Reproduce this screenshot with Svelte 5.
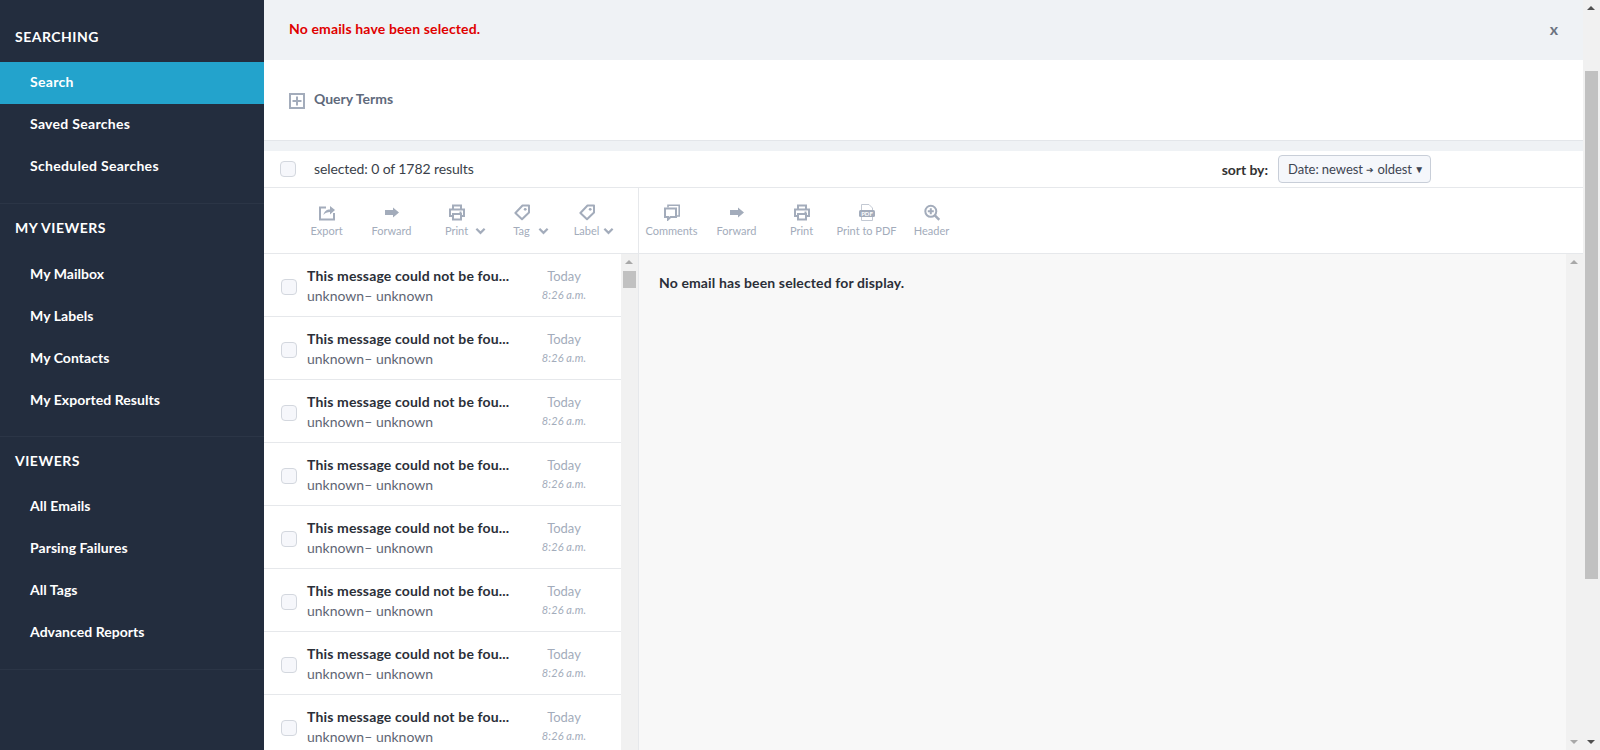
<script lang="ts">
	type NavSection = { title: string; items: string[] };

	const sections: NavSection[] = [
		{ title: 'SEARCHING', items: ['Search', 'Saved Searches', 'Scheduled Searches'] },
		{ title: 'MY VIEWERS', items: ['My Mailbox', 'My Labels', 'My Contacts', 'My Exported Results'] },
		{ title: 'VIEWERS', items: ['All Emails', 'Parsing Failures', 'All Tags', 'Advanced Reports'] }
	];

	const rows = Array.from({ length: 8 }, (_, i) => i);
</script>

<div class="page">
	<nav class="sidebar">
		{#each sections as section}
			<section class="nav-section">
				<h2>{section.title}</h2>
				{#each section.items as item}
					<a href="#top" class:active={item === 'Search'}>{item}</a>
				{/each}
			</section>
		{/each}
	</nav>

	<main class="main">
		<div class="alert">
			<span>No emails have been selected.</span>
			<button type="button" class="close">x</button>
		</div>

		<div class="query">
			<svg class="plus" width="16" height="16" viewBox="0 0 16 16" aria-hidden="true">
				<path d="M1 1h14v14H1zM8 3.500v9M3.500 8h9" fill="none" stroke="#a3acbb" stroke-width="2" />
			</svg>
			<span>Query Terms</span>
		</div>

		<div class="gap"></div>

		<div class="selected-bar">
			<span class="check"></span>
			<span class="count">selected: 0 of 1782 results</span>
			<span class="sort-label">sort by:</span>
			<span class="sort-select"><span>Date: newest <em>➔</em> oldest</span> <i>▼</i></span>
		</div>

		<div class="toolbars">
			<div class="tools left">
				<div class="tool">
					<svg width="16" height="16" viewBox="0 0 16 16" aria-hidden="true">
						<path d="M7 3H1v12h14V8.500" fill="none" stroke="#a3acbb" stroke-width="2" />
						<path d="M4.500 10.500C5 7 7.500 5 11 5V1.500L16 5.500 11 10V7.500c-2.500 0-5 .8-6.500 3z" fill="#a3acbb" />
					</svg>
					<span>Export</span>
				</div>
				<div class="tool">
					<svg width="14" height="10" viewBox="0 0 14 10" aria-hidden="true">
						<path d="M0 2.500h8V0l6 5-6 5V7.500H0z" fill="#a3acbb" />
					</svg>
					<span>Forward</span>
				</div>
				<div class="tool">
					<svg width="16" height="16" viewBox="0 0 16 16" aria-hidden="true">
						<path d="M4 5V1h8v4M4 11.500H1V5h14v6.500h-3M4 9.500h8V15H4z" fill="none" stroke="#a3acbb" stroke-width="2" />
						<path d="M10.500 7h2v1.500h-2z" fill="#a3acbb" />
					</svg>
					<span class="has-chev">Print <svg class="chev print" width="11" height="8" viewBox="0 0 12 8"><path d="M1.500 1.500 6 6l4.500-4.500" fill="none" stroke="#a3acbb" stroke-width="2.400" /></svg></span>
				</div>
				<div class="tool">
					<svg width="16" height="16" viewBox="0 0 16 16" aria-hidden="true">
						<path d="M1.400 8.500 8.500 1H15v7l-7 6.800z" fill="none" stroke="#a3acbb" stroke-width="2" stroke-linejoin="round" />
						<circle cx="11.200" cy="4.800" r="1.400" fill="#a3acbb" />
					</svg>
					<span class="has-chev">Tag <svg class="chev tag" width="11" height="8" viewBox="0 0 12 8"><path d="M1.500 1.500 6 6l4.500-4.500" fill="none" stroke="#a3acbb" stroke-width="2.400" /></svg></span>
				</div>
				<div class="tool">
					<svg width="16" height="16" viewBox="0 0 16 16" aria-hidden="true">
						<path d="M1.400 8.500 8.500 1H15v7l-7 6.800z" fill="none" stroke="#a3acbb" stroke-width="2" stroke-linejoin="round" />
						<circle cx="11.200" cy="4.800" r="1.400" fill="#a3acbb" />
					</svg>
					<span class="has-chev">Label <svg class="chev lab" width="11" height="8" viewBox="0 0 12 8"><path d="M1.500 1.500 6 6l4.500-4.500" fill="none" stroke="#a3acbb" stroke-width="2.400" /></svg></span>
				</div>
			</div>
			<div class="tools right">
				<div class="tool">
					<svg width="16" height="16" viewBox="0 0 16 16" aria-hidden="true">
						<path d="M4 3V.8h11.200V11.500H13" fill="none" stroke="#a3acbb" stroke-width="1.600" />
						<path d="M1 4h11v8.500H6.500L4 15v-2.500H1z" fill="none" stroke="#a3acbb" stroke-width="2" />
					</svg>
					<span>Comments</span>
				</div>
				<div class="tool">
					<svg width="14" height="10" viewBox="0 0 14 10" aria-hidden="true">
						<path d="M0 2.500h8V0l6 5-6 5V7.500H0z" fill="#a3acbb" />
					</svg>
					<span>Forward</span>
				</div>
				<div class="tool">
					<svg width="16" height="16" viewBox="0 0 16 16" aria-hidden="true">
						<path d="M4 5V1h8v4M4 11.500H1V5h14v6.500h-3M4 9.500h8V15H4z" fill="none" stroke="#a3acbb" stroke-width="2" />
						<path d="M10.500 7h2v1.500h-2z" fill="#a3acbb" />
					</svg>
					<span>Print</span>
				</div>
				<div class="tool">
					<svg width="16" height="17" viewBox="0 0 16 17" aria-hidden="true">
						<path d="M2.500 6V.5h7.500l3.500 3.500v2M2.500 13v3.500h11V13" fill="none" stroke="#c3c9d3" stroke-width="1" />
						<rect x="0" y="6" width="16" height="7" rx="1.500" fill="#a3acbb" />
						<text x="8" y="11.800" text-anchor="middle" class="pdf-text">PDF</text>
					</svg>
					<span>Print to PDF</span>
				</div>
				<div class="tool">
					<svg width="16" height="16" viewBox="0 0 16 16" aria-hidden="true">
						<circle cx="6.800" cy="6.800" r="5.500" fill="none" stroke="#a3acbb" stroke-width="2" />
						<path d="M6.800 3.800v6M3.800 6.800h6" fill="none" stroke="#a3acbb" stroke-width="2" />
						<path d="m10.800 10.800 4.500 4.500" stroke="#a3acbb" stroke-width="2.400" />
					</svg>
					<span>Header</span>
				</div>
			</div>
		</div>

		<div class="panes">
			<div class="list-pane">
				<div class="list">
					{#each rows as row (row)}
						<div class="row">
							<span class="check"></span>
							<div class="row-text">
								<div class="subject">This message could not be fou...</div>
								<div class="from">unknown– unknown</div>
							</div>
							<div class="row-date">
								<div class="day">Today</div>
								<div class="time">8:26 a.m.</div>
							</div>
						</div>
					{/each}
				</div>
				<div class="scroll inner">
					<i class="up"></i>
					<b></b>
				</div>
			</div>
			<div class="detail">
				<p>No email has been selected for display.</p>
				<div class="scroll detail-scroll">
					<i class="up"></i>
					<i class="down"></i>
				</div>
			</div>
		</div>
	</main>

	<div class="scroll page-scroll">
		<i class="up dark"></i>
		<b></b>
		<i class="down dark"></i>
	</div>
</div>

<style>
	:global(body) {
		margin: 0;
		font-family: Lato, 'Liberation Sans', sans-serif;
		overflow: hidden;
	}

	.page {
		display: flex;
		height: 750px;
		overflow: hidden;
		background: #fff;
		color: #2b2f38;
	}

	.sidebar {
		width: 264px;
		flex: none;
		background: #232d3e;
		color: #fff;
	}

	.nav-section {
		padding-bottom: 16px;
		border-bottom: 1px solid #2b3546;
	}

	.nav-section:first-child {
		padding-top: 13px;
		padding-bottom: 15px;
	}

	.nav-section:first-child h2 {
		height: 49px;
	}

	.nav-section:first-child a {
		padding-bottom: 3px;
		letter-spacing: 0.3px;
	}

	.nav-section:last-child {
		padding-bottom: 17px;
	}

	.nav-section:last-child h2 {
		height: 47px;
		padding-bottom: 0;
	}

	h2 {
		margin: 0;
		height: 48px;
		box-sizing: border-box;
		display: flex;
		align-items: center;
		padding: 0 0 2px 15px;
		font-size: 14px;
		font-weight: 700;
		letter-spacing: 0.5px;
	}

	.nav-section a {
		display: flex;
		align-items: center;
		height: 42px;
		box-sizing: border-box;
		padding-left: 30px;
		color: #fff;
		text-decoration: none;
		font-size: 14px;
		font-weight: 700;
		letter-spacing: 0.05px;
	}

	.nav-section a.active {
		background: #23a3cc;
	}

	.main {
		flex: 1;
		min-width: 0;
		display: flex;
		flex-direction: column;
	}

	.alert {
		height: 60px;
		flex: none;
		box-sizing: border-box;
		display: flex;
		align-items: center;
		justify-content: space-between;
		padding: 0 25px 4px 25px;
		background: #eff2f5;
		color: #e00000;
		font-size: 14px;
		font-weight: 700;
		letter-spacing: 0.14px;
	}

	.close {
		border: 0;
		padding: 0;
		background: none;
		font: inherit;
		font-size: 16px;
		color: #6b7280;
	}

	.query {
		height: 81px;
		flex: none;
		display: flex;
		align-items: center;
		gap: 9px;
		padding: 0 0 4px 25px;
		box-sizing: border-box;
		border-bottom: 1px solid #e3e6ea;
		color: #5f6a7c;
		font-size: 14px;
		font-weight: 700;
	}

	.plus {
		margin-top: 5px;
	}

	.gap {
		height: 10px;
		flex: none;
		background: #eff2f5;
	}

	.selected-bar {
		height: 36px;
		flex: none;
		display: flex;
		align-items: center;
		padding-left: 16px;
		border-bottom: 1px solid #e6e8eb;
		font-size: 14px;
	}

	.check {
		width: 14px;
		height: 14px;
		flex: none;
		border: 1px solid #d3d7de;
		border-radius: 4px;
		background: #f6f7fb;
	}

	.count {
		margin-left: 18px;
		padding-bottom: 2px;
		color: #3a3f4a;
		letter-spacing: -0.1px;
	}

	.sort-label {
		margin-left: auto;
		font-weight: 700;
		color: #333;
		letter-spacing: -0.05px;
	}

	.sort-select {
		margin: 0 152px 0 10px;
		display: flex;
		align-items: center;
		justify-content: space-between;
		width: 153px;
		height: 28px;
		box-sizing: border-box;
		padding: 0 6px 0 9px;
		border: 1px solid #c8ced8;
		border-radius: 4px;
		background: #f5f7fb;
		font-size: 13px;
		letter-spacing: -0.05px;
		color: #3e4552;
		white-space: nowrap;
	}

	.sort-select em {
		font-style: normal;
		font-size: 9px;
		vertical-align: 1px;
	}

	.sort-select i {
		font-style: normal;
		font-size: 10px;
	}

	.toolbars {
		height: 65px;
		flex: none;
		display: flex;
		border-bottom: 1px solid #e6e8eb;
	}

	.tools {
		display: flex;
		color: #a3acbb;
		font-size: 11px;
	}

	.tools.left {
		width: 375px;
		flex: none;
		padding-left: 30px;
		box-sizing: border-box;
		border-right: 1px solid #e6e8eb;
	}

	.tool {
		width: 65px;
		display: flex;
		flex-direction: column;
		align-items: center;
		padding-top: 16px;
		box-sizing: border-box;
		white-space: nowrap;
	}

	.tool > svg {
		height: 17px;
		margin-bottom: 3px;
	}

	.has-chev {
		position: relative;
	}

	.chev {
		position: absolute;
		top: 3px;
		left: calc(100% + 7px);
	}

	.chev.tag {
		left: calc(100% + 8px);
	}

	.chev.lab {
		left: calc(100% + 4px);
	}

	.pdf-text {
		font-size: 6px;
		font-weight: 700;
		fill: #fff;
	}

	.panes {
		flex: 1;
		min-height: 0;
		display: flex;
	}

	.list-pane {
		width: 375px;
		flex: none;
		display: flex;
		border-right: 1px solid #e6e8eb;
		box-sizing: border-box;
	}

	.list {
		flex: 1;
		min-width: 0;
		overflow: hidden;
	}

	.row {
		height: 63px;
		box-sizing: border-box;
		display: flex;
		align-items: center;
		padding-left: 17px;
		border-bottom: 1px solid #e6e8eb;
		font-size: 14px;
	}

	.row .check {
		margin-top: 4px;
	}

	.row-text {
		margin-left: 10px;
		width: 222px;
		flex: none;
		white-space: nowrap;
	}

	.subject {
		font-weight: 700;
		color: #2b2f38;
		letter-spacing: 0.15px;
	}

	.from {
		margin-top: 3px;
		color: #5f6674;
	}

	.row-date {
		width: 70px;
		padding-bottom: 2px;
		text-align: center;
		color: #a3acbb;
		font-size: 13px;
	}

	.time {
		margin-top: 4px;
		font-size: 11px;
		font-style: italic;
		letter-spacing: 0.1px;
	}

	.scroll {
		position: relative;
		width: 17px;
		flex: none;
		background: #f1f1f1;
	}

	.scroll b {
		position: absolute;
		left: 2px;
		right: 2px;
		background: #c1c1c1;
	}

	.inner b {
		top: 17px;
		height: 17px;
	}

	.scroll i {
		position: absolute;
		left: 4px;
		border-left: 4.500px solid transparent;
		border-right: 4.500px solid transparent;
	}

	.scroll .up {
		top: 6px;
		border-bottom: 4.500px solid #a8a8a8;
	}

	.scroll .down {
		bottom: 6px;
		border-top: 4.500px solid #a8a8a8;
	}

	.scroll .up.dark {
		border-bottom-color: #505050;
	}

	.scroll .down.dark {
		border-top-color: #505050;
	}

	.detail {
		flex: 1;
		min-width: 0;
		display: flex;
		justify-content: space-between;
		background: #f8f8f8;
	}

	.detail p {
		margin: 20px 0 0 20px;
		font-size: 14px;
		font-weight: 700;
		color: #2b2f38;
		letter-spacing: 0.13px;
	}

	.page-scroll {
		height: 750px;
	}

	.page-scroll b {
		top: 71px;
		height: 508px;
	}
</style>
